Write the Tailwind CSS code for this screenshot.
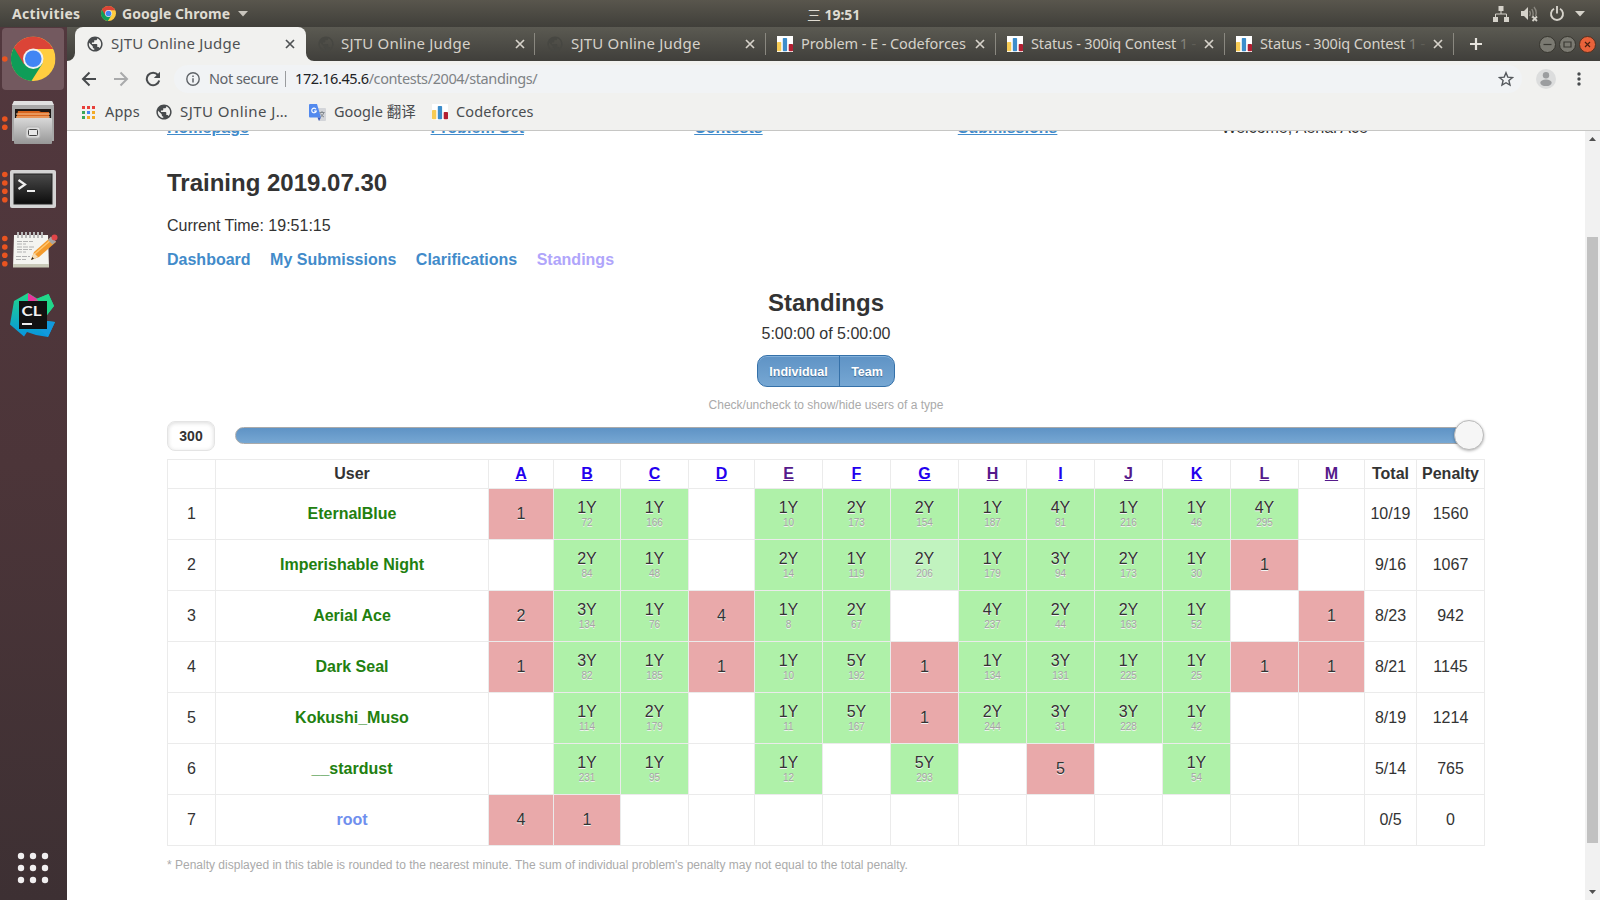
<!DOCTYPE html>
<html lang="en">
<head>
<meta charset="utf-8">
<title>SJTU Online Judge</title>
<script src="https://cdn.jsdelivr.net/npm/@tailwindcss/browser@4"></script>
</head>
<body class="w-[1600px] h-[900px] overflow-hidden flex flex-col bg-white font-['Noto_Sans','Noto_Sans_CJK_SC',sans-serif]">
<svg class="hidden">
  <defs>
    <symbol id="globe" viewBox="1.5 1.5 21 21"><path fill="currentColor" d="M12 2C6.480 2 2 6.480 2 12s4.480 10 10 10 10-4.480 10-10S17.520 2 12 2zm-1 17.930c-3.950-.49-7-3.850-7-7.930 0-.62.08-1.210.21-1.790L9 15v1c0 1.100.9 2 2 2v1.930zm6.900-2.540c-.26-.81-1-1.390-1.900-1.390h-1v-3c0-.55-.45-1-1-1H8v-2h2c.55 0 1-.45 1-1V7h2c1.100 0 2-.9 2-2v-.41c2.930 1.190 5 4.060 5 7.410 0 2.080-.8 3.970-2.100 5.390z"/></symbol>
    <symbol id="cf" viewBox="0 0 16 16"><rect width="16" height="16" fill="#fff"/><rect y="6" width="4.3" height="9.3" rx=".8" fill="#f7cb54"/><rect x="5.8" y="2" width="4.3" height="13.3" rx=".8" fill="#3c8dcb"/><rect x="11.7" y="8" width="4.3" height="7.3" rx=".8" fill="#b21f32"/></symbol>
    <symbol id="chrome" viewBox="0 0 48 48"><circle cx="24" cy="24" r="24" fill="#ffcd40"/><path d="M24 24 L3.200 12 A24 24 0 0 0 22 48 L34 29z" fill="#0f9d58"/><path d="M3.200 12A24 24 0 0 1 45.500 13.500H24L14 30z" fill="#db4437"/><circle cx="24" cy="24" r="11" fill="#f1f1f1"/><circle cx="24" cy="24" r="9" fill="#4285f4"/></symbol>
    <symbol id="x" viewBox="0 0 10 10"><path d="M1 1l8 8M9 1l-8 8" stroke="currentColor" stroke-width="1.7"/></symbol>
  </defs>
</svg>

<!-- desktop panel -->
<header class="h-[27px] shrink-0 flex items-center bg-linear-to-b from-[#59564d] to-[#403f3a] text-[#dfdbd2] text-[14px] font-bold pl-[12px] pr-[15px]">
  <span class="tracking-[0.350px] w-[89px] -mt-px">Activities</span>
  <svg class="w-[15px] h-[15px]"><use href="#chrome"/></svg>
  <span class="ml-[6px] -mt-px tracking-[0.050px] w-[116px] whitespace-nowrap">Google Chrome</span>
  <svg class="w-[10px] h-[6px]" viewBox="0 0 10 6"><path d="M0 0h10L5 5.500z" fill="#c9c5bd"/></svg>
  <span class="ml-[559px] mt-[1px] tracking-[-0.050px] whitespace-nowrap"><span class="font-normal">三</span> 19:51</span>
  <div class="ml-auto flex items-center text-[#d5d2ca]">
    <svg class="w-[16px] h-[16px]" viewBox="0 0 16 16" fill="currentColor"><path d="M5.500 0h5v5h-5zM0 11h5v5H0zM11 11h5v5h-5z"/><path d="M8 5v3M2.500 11V8h11v3" fill="none" stroke="currentColor"/></svg>
    <svg class="ml-[12px] w-[17px] h-[16px]" viewBox="0 0 17 16"><path d="M0 5h3l4-4v13l-4-4H0z" fill="currentColor"/><path d="M8.500 5q1.700 2.500 0 5M10.800 3q2.700 4.500 0 9M13 1q3.500 4.500 1.500 9" fill="none" stroke="#8a877f" stroke-width="1.400"/><path d="M11.500 10.500l4.500 4.500M16 10.500l-4.500 4.500" stroke="currentColor" stroke-width="1.800"/></svg>
    <svg class="ml-[11px] w-[16px] h-[16px]" viewBox="0 0 16 16" fill="none" stroke="currentColor" stroke-width="1.900"><path d="M5 2.800a6 6 0 1 0 6 0M8 0v7.500"/></svg>
    <svg class="ml-[10px] w-[10px] h-[6px]" viewBox="0 0 10 6"><path d="M0 0h10L5 5.500z" fill="currentColor"/></svg>
  </div>
</header>

<div class="flex grow min-h-0">
  <!-- dock -->
  <aside class="w-[67px] shrink-0 bg-linear-to-b from-[#52383e] via-[#4c3539] to-[#3d3033]">
    <svg class="w-[67px] h-[873px]" viewBox="0 27 67 873">
      <defs>
        <linearGradient id="cab" x2="0" y2="1"><stop stop-color="#d8d8d8"/><stop offset="1" stop-color="#979797"/></linearGradient>
        <linearGradient id="trm" x2="0" y2="1"><stop stop-color="#4a4a4a"/><stop offset="1" stop-color="#0c0c0c"/></linearGradient>
        <linearGradient id="cl1" x2="0" y2="1"><stop stop-color="#21d789"/><stop offset="1" stop-color="#0795e0"/></linearGradient>
      </defs>
      <rect x="2" y="28" width="62" height="62" rx="4" fill="#73595f"/>
      <use href="#chrome" x="11" y="36.500" width="44.500" height="44.500"/>
      <g fill="#e95420"><circle cx="4.800" cy="59" r="2.800"/><circle cx="4.800" cy="119" r="2.800"/><circle cx="4.800" cy="127.300" r="2.800"/>
      <circle cx="4.800" cy="174.500" r="2.800"/><circle cx="4.800" cy="183" r="2.800"/><circle cx="4.800" cy="191.300" r="2.800"/><circle cx="4.800" cy="199.700" r="2.800"/>
      <circle cx="4.800" cy="238.500" r="2.800"/><circle cx="4.800" cy="247" r="2.800"/><circle cx="4.800" cy="255.300" r="2.800"/><circle cx="4.800" cy="263.700" r="2.800"/></g>
      <!-- files -->
      <path d="M14 101h38l2 5v35H12v-35z" fill="#a8a8a8"/><path d="M14 101h38l2 4H12z" fill="#e0e0e0"/>
      <rect x="15" y="109" width="36" height="11" fill="#1c1715"/><path d="M18 111h21l2 1h8v7H16z" fill="#d8661f"/><path d="M16 114h34M16 117h34" stroke="#f8c89a"/>
      <rect x="14" y="118" width="38" height="26" rx="1" fill="url(#cab)"/><rect x="26" y="127" width="14" height="11" rx="2" fill="#dcdcdc" stroke="#b5b5b5"/><rect x="28.500" y="129.500" width="9" height="6" rx="1" fill="#e8e8e8" stroke="#444"/>
      <!-- terminal -->
      <rect x="10" y="170" width="46" height="38" rx="2" fill="#d4d4d4"/><rect x="14" y="174" width="38" height="30" fill="url(#trm)" stroke="#222"/>
      <path d="M18.500 180l6.500 4.500-6.500 4.500" fill="none" stroke="#eee" stroke-width="2.200"/><path d="M27 191h8" stroke="#eee" stroke-width="2"/>
      <!-- editor -->
      <path d="M14 235h34l1 32H13z" fill="#f4f4f0"/><path d="M13 264h36v3.500H13z" fill="#c9c9b8"/>
      <path d="M18 232v6M22 232v6M26 232v6M30 232v6M34 232v6M38 232v6M42 232v6" stroke="#b8b8b8" stroke-width="2"/>
      <path d="M17 241.500h16M17 244h9M17 247h18M17 249.500h15M17 252h9M16 256.500h14M16 259.500h10" stroke="#aaa" stroke-width=".9" stroke-dasharray="5 1"/>
      <path d="M31 260l3-8 17-15 5 5-17 15z" fill="#f39a2c"/><path d="M33.500 255L52 239" stroke="#ffc670" stroke-width="1.500"/><path d="M31 260l3-7 4 4z" fill="#f3dcb5"/><path d="M31 260l1.300-3 1.700 1.700z" fill="#222"/><path d="M48 240l3-3.500 5 5-3.500 3z" fill="#a5a5a5"/><circle cx="54.500" cy="237.500" r="3" fill="#e04548"/>
      <!-- CLion -->
      <path d="M14 301l14-8 9 5.500 11.500-4.500 5.500 12-7 9v6l8 1-7 15-12-2-9-3-3 4.500-14-12z" fill="url(#cl1)"/><path d="M28 293l9 6v3h-9z" fill="#e8359c"/><path d="M37 299l-6 4h10z" fill="#b4708f"/><path d="M37 299l11.500-5 5.500 12-7 9z" fill="#21d789"/><path d="M40 330l7-9 8 1-7 15z" fill="#1299dd"/>
      <rect x="19" y="301" width="28" height="28" fill="#111"/>
      <text x="21.500" y="315.500" font-size="14" font-weight="700" fill="#f2f2f2" font-family="Lato" textLength="20" lengthAdjust="spacingAndGlyphs">CL</text><rect x="22" y="323" width="10" height="2" fill="#eee"/>
      <!-- application grid -->
      <g fill="#f1eff0"><circle cx="21" cy="856" r="3.200"/><circle cx="33" cy="856" r="3.200"/><circle cx="45" cy="856" r="3.200"/><circle cx="21" cy="868" r="3.200"/><circle cx="33" cy="868" r="3.200"/><circle cx="45" cy="868" r="3.200"/><circle cx="21" cy="880" r="3.200"/><circle cx="33" cy="880" r="3.200"/><circle cx="45" cy="880" r="3.200"/></g>
    </svg>
  </aside>

  <!-- browser window -->
  <div class="w-[1533px] flex flex-col min-h-0">
    <div class="h-[34px] shrink-0 flex items-center bg-linear-to-b from-[#5b5a52] to-[#403f3b] text-[14.500px] text-[#d6d2ca]">
      <div class="w-2 h-full bg-linear-to-b from-[#5b5a52] to-[#403f3b] flex items-end"><svg class="w-2 h-2" viewBox="0 0 8 8"><path d="M8 0v8H0a8 8 0 0 0 8-8z" fill="#f1f1ef"/></svg></div>
      <div class="w-[231px] h-full rounded-t-lg bg-[#f1f1ef] flex items-center pl-[12px] text-[#4f5254]">
        <svg class="w-4 h-4 text-[#484b4d]"><use href="#globe"/></svg>
        <span class="ml-[8px] -mt-px w-[174px] whitespace-nowrap text-[15px] tracking-[0.200px]">SJTU Online Judge</span>
        <svg class="w-[10px] h-[10px]"><use href="#x"/></svg>
      </div>
      <div class="w-2 h-full flex items-end"><svg class="w-2 h-2" viewBox="0 0 8 8"><path d="M0 0v8h8a8 8 0 0 1-8-8z" fill="#f1f1ef"/></svg></div>
      <div class="w-[221px] flex items-center pl-[4px] h-[22px] border-r border-[#8a8880]">
        <svg class="w-4 h-4 text-[#474742]"><use href="#globe"/></svg>
        <span class="ml-[7px] -mt-px w-[174px] whitespace-nowrap text-[15px] tracking-[0.200px]">SJTU Online Judge</span>
        <svg class="w-[10px] h-[10px]"><use href="#x"/></svg>
      </div>
      <div class="w-[231px] flex items-center pl-[12px] h-[22px] border-r border-[#8a8880]">
        <svg class="w-4 h-4 text-[#474742]"><use href="#globe"/></svg>
        <span class="ml-[8px] -mt-px w-[174px] whitespace-nowrap text-[15px] tracking-[0.200px]">SJTU Online Judge</span>
        <svg class="w-[10px] h-[10px]"><use href="#x"/></svg>
      </div>
      <div class="w-[230px] flex items-center pl-[11px] h-[22px] border-r border-[#8a8880]">
        <svg class="w-4 h-4"><use href="#cf"/></svg>
        <span class="ml-[8px] -mt-px w-[174px] whitespace-nowrap tracking-[-0.080px]">Problem - E - Codeforces</span>
        <svg class="w-[10px] h-[10px]"><use href="#x"/></svg>
      </div>
      <div class="w-[229px] flex items-center pl-[11px] h-[22px] border-r border-[#8a8880]">
        <svg class="w-4 h-4"><use href="#cf"/></svg>
        <span class="ml-[8px] -mt-px w-[173px] whitespace-nowrap tracking-[-0.150px]">Status - 300iq Contest <span class="text-[#85837b]">1</span> <span class="text-[#5f5e57]">-</span></span>
        <svg class="w-[10px] h-[10px]"><use href="#x"/></svg>
      </div>
      <div class="w-[229px] flex items-center pl-[11px] h-[22px] border-r border-[#8a8880]">
        <svg class="w-4 h-4"><use href="#cf"/></svg>
        <span class="ml-[8px] -mt-px w-[173px] whitespace-nowrap tracking-[-0.150px]">Status - 300iq Contest <span class="text-[#85837b]">1</span> <span class="text-[#5f5e57]">-</span></span>
        <svg class="w-[10px] h-[10px]"><use href="#x"/></svg>
      </div>
      <svg class="ml-[16px] w-[12px] h-[12px]" viewBox="0 0 12 12"><path d="M6 0v12M0 6h12" stroke="#e6e3dd" stroke-width="2.200"/></svg>
      <div class="ml-auto mr-[4px] flex gap-[3px]">
        <svg class="w-[17px] h-[17px]" viewBox="0 0 17 17"><circle cx="8.500" cy="8.500" r="8" fill="#7b7a72" stroke="#37362f"/><path d="M4.500 8.500h8" stroke="#3a3933" stroke-width="1.200"/></svg>
        <svg class="w-[17px] h-[17px]" viewBox="0 0 17 17"><circle cx="8.500" cy="8.500" r="8" fill="#7b7a72" stroke="#37362f"/><path d="M5 6h7v5H5z" fill="none" stroke="#3a3933" stroke-width="1.200"/></svg>
        <svg class="w-[17px] h-[17px]" viewBox="0 0 17 17"><circle cx="8.500" cy="8.500" r="8" fill="#e9623a" stroke="#54301f"/><path d="M6 6l5 5M11 6l-5 5" stroke="#4a2010" stroke-width="1.200"/></svg>
      </div>
    </div>

    <div class="h-[36px] shrink-0 bg-[#f1f1ef] flex items-center pl-[14px] text-[14.500px] text-[#5f6368]">
      <svg class="w-[16px] h-[16px]" viewBox="0 0 16 16" fill="none" stroke="#484b4d" stroke-width="2"><path d="M15 8H2M8.500 1.500L2 8l6.500 6.500"/></svg>
      <svg class="ml-[16px] w-[16px] h-[16px]" viewBox="0 0 16 16" fill="none" stroke="#a9aaab" stroke-width="2"><path d="M1 8h13M7.500 1.500L14 8l-6.500 6.500"/></svg>
      <svg class="ml-[16px] w-[16px] h-[16px]" viewBox="0 0 16 16"><path d="M13 4A6.300 6.300 0 1 0 14.200 9.500" fill="none" stroke="#484b4d" stroke-width="2"/><path d="M15 .8V7H8.800z" fill="#484b4d"/></svg>
      <div class="ml-[13px] w-[1348px] h-[28px] bg-[#f1f3f5] rounded-full flex items-center pl-[12px]">
        <svg class="w-[14px] h-[14px]" viewBox="0 0 14 14"><circle cx="7" cy="7" r="6.200" fill="none" stroke="#5f6368" stroke-width="1.400"/><path d="M7 6.200v4.300M7 3.400v1.500" stroke="#5f6368" stroke-width="1.500"/></svg>
        <span class="ml-[9px] -mt-px w-[76px] whitespace-nowrap tracking-[-0.450px]">Not secure</span>
        <span class="w-px h-4 bg-[#9a9c9e]"></span>
        <span class="ml-[9px] -mt-px whitespace-nowrap tracking-[-0.400px] text-[#7e8285]"><span class="text-[#202124]">172.16.45.6</span>/contests/2004/standings/</span>
        <svg class="ml-auto mr-[8px] w-[16px] h-[16px]" viewBox="0 0 16 16"><path d="M8 1.700l1.800 4.400 4.700.4-3.600 3 1.100 4.600L8 11.700l-4 2.400 1.100-4.600-3.600-3 4.700-.4z" fill="none" stroke="#54585c" stroke-width="1.400"/></svg>
      </div>
      <svg class="ml-[14px] w-[20px] h-[20px]" viewBox="0 0 20 20"><circle cx="10" cy="10" r="10" fill="#dcdddd"/><circle cx="10" cy="6.200" r="3.200" fill="#9b9d9f"/><ellipse cx="10" cy="13.800" rx="5.700" ry="3.300" fill="#9b9d9f"/></svg>
      <svg class="ml-[21px] w-[4px] h-[14px]" viewBox="0 0 4 14" fill="#484b4d"><circle cx="2" cy="2" r="1.700"/><circle cx="2" cy="7" r="1.700"/><circle cx="2" cy="12" r="1.700"/></svg>
    </div>

    <div class="h-[34px] shrink-0 bg-[#f1f1ef] border-b border-[#c6c6c4] flex items-center pb-[3px] pl-[15px] text-[14.500px] text-[#4a4d50]">
      <svg class="w-[13px] h-[13px]" viewBox="0 0 13 13"><path d="M0 0h3v3H0zM5 0h3v3H5zM10 0h3v3h-3z" fill="#e8403a"/><path d="M0 5h3v3H0zM0 10h3v3H0z" fill="#3aa757"/><path d="M5 5h3v3H5z" fill="#4285f4"/><path d="M10 5h3v3h-3zM5 10h3v3H5zM10 10h3v3h-3z" fill="#f2ab26"/></svg>
      <span class="ml-[10px] -mt-px w-[51px] tracking-[0.200px]">Apps</span>
      <svg class="w-4 h-4 text-[#484b4d]"><use href="#globe"/></svg>
      <span class="ml-[8px] -mt-px w-[129px] whitespace-nowrap text-[15px] tracking-[0.450px]">SJTU Online J…</span>
      <svg class="w-[17px] h-[17px]" viewBox="0 0 17 17"><path d="M6 4h10a1 1 0 0 1 1 1v11a1 1 0 0 1-1 1h-6z" fill="#d3d5d9"/><path d="M0 1a1 1 0 0 1 1-1h7l4 13.500H1a1 1 0 0 1-1-1z" fill="#5289ee"/><path d="M8.500 13.500H12L10 17z" fill="#3a5bc0"/><path d="M7 5.200a2.300 2.300 0 1 0 .3 1.800H5" fill="none" stroke="#fff" stroke-width="1.100"/><path d="M10.500 8.500h5M13 7v1.500M15 8.500q-1 3-3.500 4.500M11.500 9.500q1 2.500 3.500 3.500" fill="none" stroke="#7c8288" stroke-width=".9"/></svg>
      <span class="ml-[8px] -mt-px w-[98px] whitespace-nowrap">Google 翻译</span>
      <svg class="w-[16px] h-[16px]"><use href="#cf"/></svg>
      <span class="ml-[8px] -mt-px whitespace-nowrap tracking-[0.100px]">Codeforces</span>
    </div>

    <div class="flex grow min-h-0">
      <main class="w-[1518px] pl-[100px] overflow-hidden bg-white text-[#333] font-['Liberation_Sans',Arial,sans-serif] text-[16px] leading-[24px]">
        <nav class="flex mt-[-15px] h-[24px] text-[#428bca] font-bold">
          <span class="w-[263.600px] underline">Homepage</span><span class="w-[263.600px] underline">Problem Set</span><span class="w-[263.600px] underline">Contests</span><span class="w-[263.600px] underline">Submissions</span>
          <span class="font-normal text-[#333]">Welcome, Aerial Ace</span>
        </nav>
        <h1 class="mt-[25px] text-[24px] leading-[36px] font-bold">Training 2019.07.30</h1>
        <p class="mt-[13px]">Current Time: 19:51:15</p>
        <nav class="mt-[10px] flex gap-[19.500px] font-bold text-[#428bca]"><a>Dashboard</a><a>My Submissions</a><a>Clarifications</a><a class="text-[#b0a5fb]">Standings</a></nav>
        <div class="w-[1318px]">
          <h2 class="mt-[13px] text-center text-[24px] leading-[36px] font-bold">Standings</h2>
          <p class="mt-[1px] text-center">5:00:00 of 5:00:00</p>
          <div class="mt-[9px] mx-auto w-[138px] h-[32px] flex rounded-[10px] border border-[#3571a9] bg-linear-to-b from-[#5f93c5] to-[#76a7d3] text-[12.500px] font-bold text-white text-center [text-shadow:0_1px_1px_#3e6790] shadow-[inset_0_1px_0_#83b0da]">
            <span class="w-[82px] border-r border-[#3571a9] leading-[32px]">Individual</span><span class="grow leading-[32px]">Team</span>
          </div>
          <p class="mt-[6px] text-center text-[12px] leading-[24px] text-[#aaa]">Check/uncheck to show/hide users of a type</p>
          <div class="mt-[4px] h-[30px] flex items-start">
            <div class="w-[48px] h-[30px] rounded-lg border border-[#e4e4e4] shadow-[inset_0_1px_4px_rgba(0,0,0,.15)] text-center text-[14px] leading-[28px] font-bold">300</div>
            <div class="ml-[20px] mt-[6px] w-[1234px] h-[17px] rounded-full border border-[#aaa] bg-linear-to-b from-[#5f93c5] to-[#76a7d3]"></div>
            <div class="ml-[-15px] -mt-px w-[30px] h-[30px] rounded-full border border-[#bbb] bg-[#f6f6f6] shadow-[0_1px_3px_rgba(0,0,0,.3)]"></div>
          </div>
          <table class="mt-[8px] w-[1318px] table-fixed border-separate border-spacing-0 border-l border-t border-[#ebebeb] text-center">
            <colgroup><col class="w-[48px]"><col class="w-[273px]"><col class="w-[65px]"><col class="w-[67px]"><col class="w-[68px]"><col class="w-[66px]"><col class="w-[68px]"><col class="w-[68px]"><col class="w-[68px]"><col class="w-[68px]"><col class="w-[68px]"><col class="w-[68px]"><col class="w-[68px]"><col class="w-[68px]"><col class="w-[66px]"><col class="w-[52px]"><col class="w-[68px]"></colgroup>
            <thead><tr id="head" class="h-[29px]"></tr></thead>
            <tbody id="rows"></tbody>
          </table>
          <p class="mt-[7px] text-[12px] leading-[24px] text-[#aaa]">* Penalty displayed in this table is rounded to the nearest minute. The sum of individual problem's penalty may not equal to the total penalty.</p>
        </div>
      </main>
      <div class="w-[15px] bg-[#f1f1f1] flex flex-col items-center">
        <svg class="mt-[6px] w-[7px] h-[4px]" viewBox="0 0 7 4"><path d="M0 4h7L3.500 0z" fill="#505050"/></svg>
        <div class="mt-[96px] w-[11px] h-[606px] bg-[#c1c1c1]"></div>
        <svg class="mt-auto mb-[6px] w-[7px] h-[4px]" viewBox="0 0 7 4"><path d="M0 0h7L3.500 4z" fill="#505050"/></svg>
      </div>
    </div>
  </div>
</div>
<script>
const B = 'border-r border-b border-[#ebebeb] p-0';
const visited = 'EHJLM';
document.getElementById('head').innerHTML =
  `<th class="${B}"></th><th class="${B}">User</th>` +
  [...'ABCDEFGHIJKLM'].map(c => `<th class="${B}"><a class="underline ${visited.includes(c) ? 'text-[#551a8b]' : 'text-[#2300ee]'}">${c}</a></th>`).join('') +
  `<th class="${B}">Total</th><th class="${B}">Penalty</th>`;
// Cells: "tries/minute" solved, "n" failed, "." untouched; a trailing "+" marks a lighter cell.
const data = [
  ['EternalBlue', '1 1/72 1/166 . 1/10 2/173 2/154 1/187 4/81 1/216 1/46 4/295 .', '10/19', 1560],
  ['Imperishable Night', '. 2/84 1/48 . 2/14 1/119 2/206+ 1/179 3/94 2/173 1/30 1 .', '9/16', 1067],
  ['Aerial Ace', '2 3/134 1/76 4 1/8 2/67 . 4/237 2/44 2/163 1/52 . 1', '8/23', 942],
  ['Dark Seal', '1 3/82 1/185 1 1/10 5/192 1 1/134 3/131 1/225 1/25 1 1', '8/21', 1145],
  ['Kokushi_Muso', '. 1/114 2/179 . 1/11 5/167 1 2/244 3/31 3/228 1/42 . .', '8/19', 1214],
  ['__stardust', '. 1/231 1/95 . 1/12 . 5/293 . 5 . 1/54 . .', '5/14', 765],
  ['root', '4 1 . . . . . . . . . . .', '0/5', 0],
];
const cell = s => {
  if (s === '.') return `<td class="${B}"></td>`;
  if (!s.includes('/')) return `<td class="${B} bg-[#e9a9aa] [text-shadow:0_1px_0_#f3f3f3]">${s}</td>`;
  const [n, m] = s.replace('+', '').split('/');
  const bg = s.endsWith('+') ? 'bg-[#c1f3bf]' : 'bg-[#aff1a9]';
  return `<td class="${B} ${bg} [text-shadow:0_1px_0_#f3f3f3]"><div class="leading-[16px]">${n}Y</div><div class="mt-px text-[10px] leading-[12px] text-[#a5a5a5]">${m}</div></td>`;
};
document.getElementById('rows').innerHTML = data.map((r, i) =>
  `<tr class="h-[51px]"><td class="${B}">${i + 1}</td><td class="${B} font-bold ${r[0] === 'root' ? 'text-[#6f8fee]' : 'text-[#22800f]'}">${r[0]}</td>` +
  r[1].split(' ').map(cell).join('') + `<td class="${B}">${r[2]}</td><td class="${B}">${r[3]}</td></tr>`).join('');
</script>
</body>
</html>
